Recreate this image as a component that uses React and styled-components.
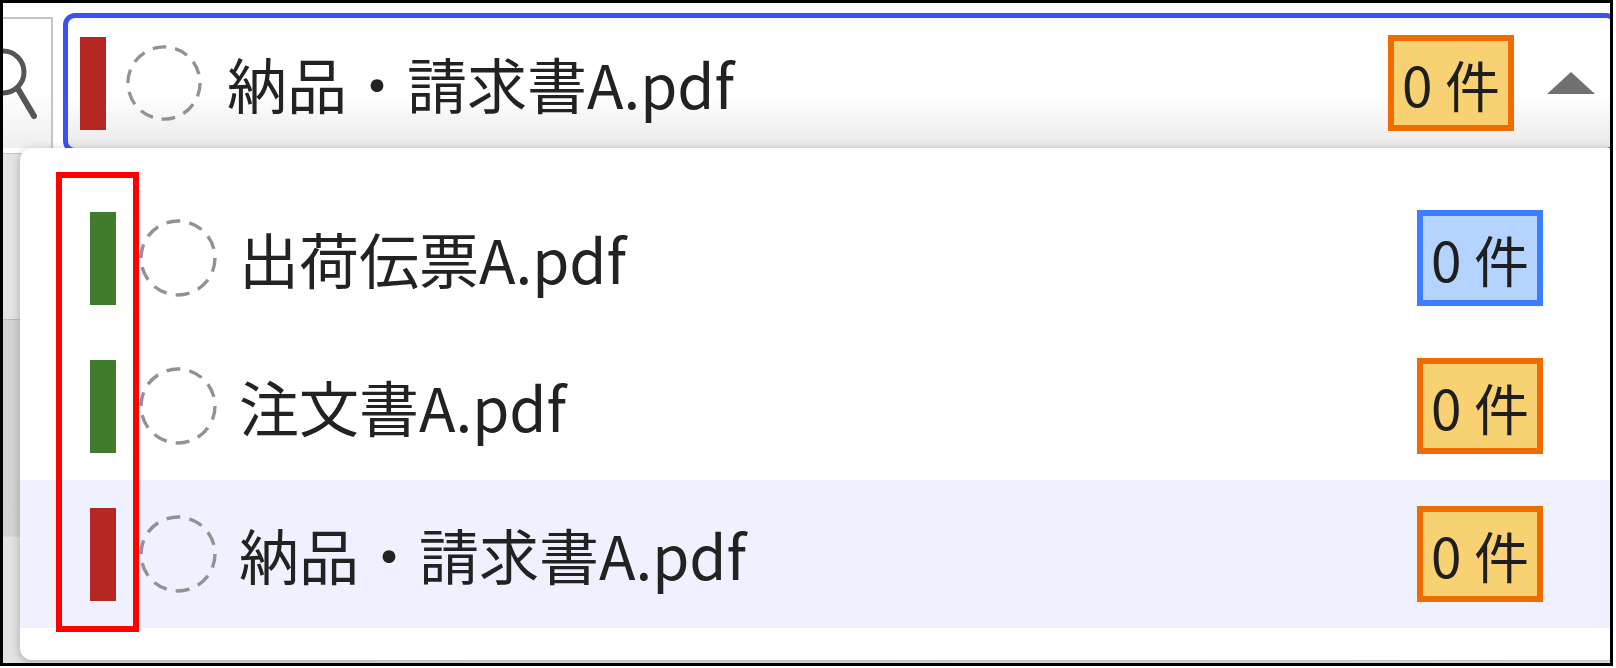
import React from "react";
import styled, { createGlobalStyle } from "styled-components";

const GlobalStyle = createGlobalStyle`
  html, body {
    margin: 0;
    padding: 0;
    background: #ffffff;
  }
  * {
    box-sizing: border-box;
  }
`;

/////////////Styling/////////////////
const Frame = styled.div`
  position: relative;
  width: 1613px;
  height: 666px;
  border: 3px solid #000;
  background: #fff;
  overflow: hidden;
  display: flex;
  flex-direction: column;
  font-family: "Noto Sans CJK JP", "Noto Sans", sans-serif;
  color: #222;
`;

const TopBar = styled.div`
  display: flex;
  align-items: flex-start;
  padding-top: 10px;
  height: 150px;
  flex: none;
`;

const SearchBox = styled.div`
  width: 50px;
  height: 131px;
  margin-top: 4px;
  border-top: 2px solid #c4c4c4;
  border-right: 2px solid #c4c4c4;
  background: linear-gradient(to bottom, #fff 55%, #efefef);
  overflow: hidden;
  flex: none;
`;

const Select = styled.div`
  width: 1555px;
  height: 140px;
  margin-left: 10px;
  border: 5px solid #3b52f2;
  border-radius: 12px;
  background: linear-gradient(to bottom, #fff 58%, #eaeaea);
  display: flex;
  align-items: center;
  padding: 0 18px 0 12px;
  flex: none;
`;

const Bar = styled.div`
  width: 26px;
  height: 93px;
  background: ${(p) => p.$color};
  flex: none;
`;

const Ring = styled.svg`
  width: ${(p) => p.$size}px;
  height: ${(p) => p.$size}px;
  margin-left: ${(p) => p.$gap}px;
  flex: none;
`;

const Name = styled.span`
  font-size: 60px;
  line-height: 1;
  margin-left: ${(p) => p.$gap}px;
  white-space: nowrap;
`;

const Badge = styled.span`
  margin-left: auto;
  width: 126px;
  height: 96px;
  border: 6px solid ${(p) => (p.$tone === "blue" ? "#3d7dff" : "#ef6c00")};
  background: ${(p) => (p.$tone === "blue" ? "#b4d4ff" : "#f8d272")};
  display: flex;
  align-items: center;
  justify-content: center;
  font-size: 55px;
  line-height: 1;
  white-space: nowrap;
  color: #1e1e1e;
  flex: none;
`;

const Caret = styled.span`
  width: 0;
  height: 0;
  margin-left: 33px;
  border-left: 24px solid transparent;
  border-right: 24px solid transparent;
  border-bottom: 22px solid #707070;
  flex: none;
`;

const Backdrop = styled.div`
  flex: 1;
  display: flex;
  flex-direction: column;
  background: #e6e6e6;
`;

const BackRow = styled.div`
  height: ${(p) => p.$h}px;
  border-top: 1px solid ${(p) => p.$line};
  background: linear-gradient(to right, ${(p) => p.$shade}, #f2f2f2);
  flex: none;
`;

const Dropdown = styled.div`
  position: absolute;
  left: 17px;
  top: 145px;
  width: 1600px;
  height: 512px;
  background: #fff;
  border-radius: 12px;
  box-shadow: 0 2px 10px rgba(0, 0, 0, 0.25);
  padding: 36px 0 0 0;
  display: flex;
  flex-direction: column;
`;

const Option = styled.div`
  height: 148px;
  display: flex;
  align-items: center;
  padding: 0 77px 0 70px;
  background: ${(p) => (p.$active ? "#eff1fe" : "transparent")};
`;

const Marker = styled.div`
  position: absolute;
  left: 53px;
  top: 169px;
  width: 83px;
  height: 460px;
  border: 6px solid #ff0000;
  pointer-events: none;
`;

const DashedRing = ({ gap, size }) => (
  <Ring $gap={gap} $size={size} viewBox="0 0 80 80">
    <circle
      cx="40"
      cy="40"
      r="37"
      fill="none"
      stroke="#929292"
      strokeWidth="3.4"
      strokeDasharray="14 9.2"
    />
  </Ring>
);

const options = [
  { name: "出荷伝票A.pdf", color: "#417b2e", tone: "blue" },
  { name: "注文書A.pdf", color: "#417b2e", tone: "orange" },
  { name: "納品・請求書A.pdf", color: "#b52723", tone: "orange", active: true },
];

////////////////App////////////////////
const App = () => {
  return (
    <>
      <GlobalStyle />
      <Frame>
        <TopBar>
          <SearchBox>
            <svg width="48" height="129" viewBox="0 0 48 129">
              <circle cx="0" cy="53" r="21" fill="none" stroke="#555" strokeWidth="5" />
              <line x1="15" y1="70" x2="31" y2="97" stroke="#555" strokeWidth="6" strokeLinecap="round" />
            </svg>
          </SearchBox>
          <Select>
            <Bar $color="#b52723" />
            <DashedRing gap={19} size={78} />
            <Name $gap={24}>納品・請求書A.pdf</Name>
            <Badge $tone="orange">0 件</Badge>
            <Caret />
          </Select>
        </TopBar>
        <Backdrop>
          <BackRow $h={166} $line="#c8c8c8" $shade="#e4e4e4" />
          <BackRow $h={217} $line="#bcbcbc" $shade="#d3d3d3" />
          <BackRow $h={130} $line="#d8d8d8" $shade="#e2e2e2" />
        </Backdrop>
        <Dropdown>
          {options.map((o) => (
            <Option key={o.name} $active={o.active}>
              <Bar $color={o.color} />
              <DashedRing gap={22} size={80} />
              <Name $gap={21}>{o.name}</Name>
              <Badge $tone={o.tone}>0 件</Badge>
            </Option>
          ))}
        </Dropdown>
        <Marker />
      </Frame>
    </>
  );
};

export default App;
